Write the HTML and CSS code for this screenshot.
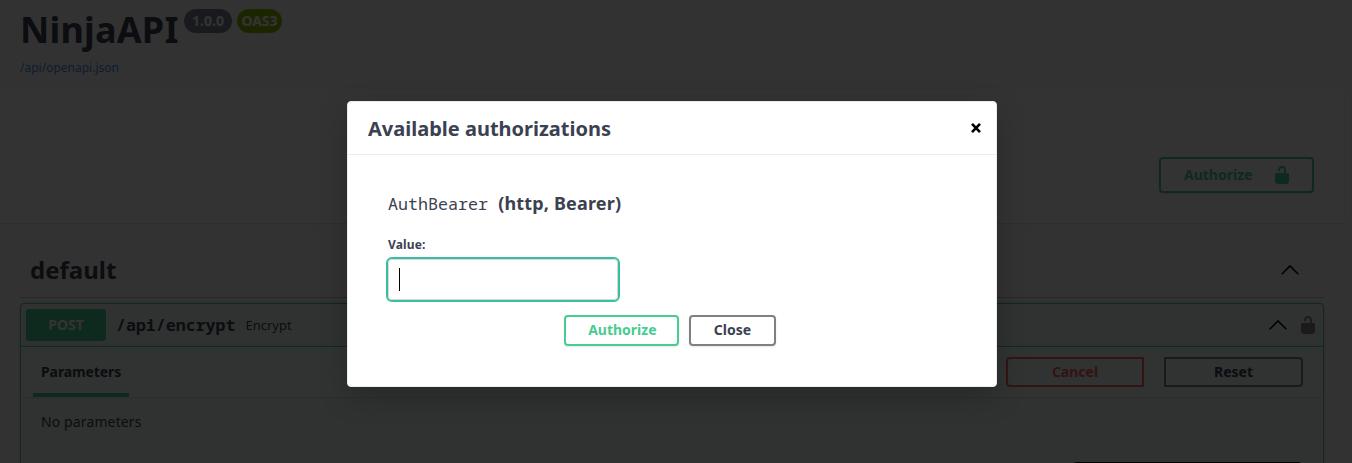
FILE: index.html
```html
<!DOCTYPE html>
<html lang="en">
<head>
<meta charset="utf-8">
<title>NinjaAPI</title>
<link rel="stylesheet" href="styles.css">
</head>
<body>
<main class="page">
  <section class="info">
    <h1 class="title"><span class="name">NinjaAPI</span><span class="badge version">1.0.0</span><span class="badge oas">OAS3</span></h1>
    <a class="spec-link">/api/openapi.json</a>
  </section>
  <section class="schemes">
    <button class="btn authorize top-authorize"><span>Authorize</span>
      <svg class="lock" viewBox="0 0 20 20" width="20" height="20"><path d="M15.8 8H14V5.6C14 2.703 12.665 1 10 1 7.334 1 6 2.703 6 5.6V6h2v-.801C8 3.754 8.797 3 10 3c1.203 0 2 .754 2 2.199V8H4c-.553 0-1 .646-1 1.199V17c0 .549.428 1.139.951 1.307l1.197.387C5.672 18.861 6.55 19 7.1 19h5.8c.549 0 1.428-.139 1.951-.307l1.196-.387c.524-.167.953-.757.953-1.306V9.199C17 8.646 16.352 8 15.8 8z"/></svg>
    </button>
  </section>
  <section class="tag">
    <h2 class="tag-head"><span class="tag-name">default</span>
      <svg class="chevron" viewBox="0 0 20 20" width="20" height="20"><path d="M1.7 14.2 10 5.9l8.3 8.3"/></svg>
    </h2>
    <div class="operation">
      <div class="summary">
        <span class="method">POST</span>
        <span class="path">/api/encrypt</span>
        <span class="desc">Encrypt</span>
        <svg class="chevron" viewBox="0 0 20 20" width="20" height="20"><path d="M1.7 14.2 10 5.9l8.3 8.3"/></svg>
        <svg class="lock muted" viewBox="0 0 20 20" width="20" height="20"><path d="M15.8 8H14V5.6C14 2.703 12.665 1 10 1 7.334 1 6 2.703 6 5.6V6h2v-.801C8 3.754 8.797 3 10 3c1.203 0 2 .754 2 2.199V8H4c-.553 0-1 .646-1 1.199V17c0 .549.428 1.139.951 1.307l1.197.387C5.672 18.861 6.55 19 7.1 19h5.8c.549 0 1.428-.139 1.951-.307l1.196-.387c.524-.167.953-.757.953-1.306V9.199C17 8.646 16.352 8 15.8 8z"/></svg>
      </div>
      <div class="section-head">
        <span class="tab">Parameters</span>
        <button class="btn cancel">Cancel</button>
        <button class="btn reset">Reset</button>
      </div>
      <div class="params">
        <p class="empty">No parameters</p>
        <div class="execute"></div>
      </div>
    </div>
  </section>
</main>
<div class="overlay">
  <div class="modal">
    <header class="modal-head">
      <h3 class="modal-title">Available authorizations</h3>
      <svg class="close" viewBox="0 0 12 12" width="12" height="12"><path d="M2 1.8 10 10.2M10 1.8 2 10.2"/></svg>
    </header>
    <div class="modal-body">
      <h4 class="scheme"><code class="scheme-name">AuthBearer</code><span class="scheme-type">(http, Bearer)</span></h4>
      <label class="label">Value:</label>
      <div class="field"><span class="caret"></span></div>
      <div class="actions">
        <button class="btn authorize">Authorize</button>
        <button class="btn">Close</button>
      </div>
    </div>
  </div>
</div>
</body>
</html>
```
FILE: styles.css
```css
* { box-sizing: border-box; }
html, body { margin: 0; height: 463px; overflow: hidden; }
body { background: #fafafa; color: #3b4151; font-family: "Noto Sans", sans-serif; position: relative; }
h1, h2, h3, h4, p { margin: 0; }
.page { display: flex; flex-direction: column; height: 463px; overflow: hidden; }
.info { flex: none; height: 90px; padding: 5px 20px 0; }
.title { display: flex; align-items: flex-start; height: 50px; font-size: 36px; line-height: 49px; }
.name { width: 164px; letter-spacing: .2px; white-space: nowrap; }
.badge { height: 24px; margin-top: 4px; border-radius: 12px; color: #fff; font-size: 14px; line-height: 24px; text-align: center; }
.version { width: 48px; background: #7d8492; }
.oas { width: 45px; margin-left: 5px; background: #89bf04; }
.spec-link { display: block; margin-top: 4px; color: #4990e2; font-size: 12px; line-height: 17px; }
.schemes { flex: none; display: flex; justify-content: flex-end; align-items: flex-start; height: 133px; margin-right: 8px; padding: 67px 30px 0 0; background: #fff; box-shadow: 0 1px 2px rgba(0,0,0,.15); }
.btn { height: 31px; padding: 0 23px 1px; border: 2px solid #808080; border-radius: 4px; background: transparent; color: #3b4151; box-shadow: 0 1px 2px rgba(0,0,0,.1); font: bold 14px/24px "Noto Sans", sans-serif; white-space: nowrap; }
.authorize { border-color: #49cc90; color: #49cc90; }
.top-authorize { display: flex; align-items: center; justify-content: space-between; width: 155px; height: 36px; padding: 0 20px 0 23px; }
.lock { fill: #49cc90; flex: none; margin-top: -1px; }
.tag { flex: none; padding: 20px 28px 0 20px; }
.tag-head { display: flex; align-items: center; justify-content: space-between; height: 55px; padding: 0 24px 0 10px; border-bottom: 1px solid rgba(59,65,81,.3); font-size: 24px; }
.tag-name { padding-bottom: 2px; }
.chevron { flex: none; fill: none; stroke: #000; stroke-width: 1.5; }
.operation { height: 180px; margin-top: 5px; border: 1px solid #49cc90; border-radius: 4px; background: #f0f8f4; box-shadow: 0 0 3px rgba(0,0,0,.19); overflow: hidden; }
.summary { display: flex; align-items: center; height: 43px; padding: 0 5px; border-bottom: 1px solid #49cc90; }
.method { width: 80px; height: 32px; border-radius: 3px; background: #49cc90; color: #fff; font-size: 14px; font-weight: bold; line-height: 32px; text-align: center; }
.path { margin-left: 10px; padding-bottom: 2px; font: bold 16.6px "Noto Sans Mono", "DejaVu Sans Mono", monospace; }
.desc { flex: 1; margin-left: 10px; font-size: 13px; }
.summary .lock { margin-left: 10px; }
.muted { fill: #888; }
.section-head { display: flex; align-items: center; height: 50px; padding: 0 20px 0 12px; background: #f4faf7; box-shadow: 0 1px 2px rgba(0,0,0,.1); }
.tab { align-self: flex-end; width: 96px; height: 42px; margin-right: auto; padding-left: 8px; border-bottom: 4px solid #49cc90; font-size: 14px; font-weight: bold; letter-spacing: -.1px; line-height: 33px; }
.cancel, .reset { height: 30px; box-shadow: none; }
.cancel { width: 138px; border-color: #ff6060; border-radius: 4px 0 0 4px; color: #ff6060; }
.reset { width: 139px; margin-left: 20px; border-radius: 0 4px 4px 0; }
.params { display: flex; align-items: flex-start; justify-content: space-between; padding: 15px 21px 0 20px; }
.empty { font-size: 14px; letter-spacing: .12px; line-height: 20px; }
.execute { width: 229px; height: 32px; margin-top: 50px; border: 2px solid #000; border-radius: 4px; }
.overlay { position: absolute; inset: 0; display: flex; justify-content: center; align-items: flex-start; padding: 101px 8px 0 0; background: rgba(0,0,0,.8); }
.modal { width: 650px; height: 286px; border: 1px solid #ebebeb; border-radius: 4px; background: #fff; box-shadow: 0 10px 30px rgba(0,0,0,.2); }
.modal-head { display: flex; align-items: center; justify-content: space-between; height: 53px; padding: 0 14px 0 20px; border-bottom: 1px solid #ebebeb; }
.modal-title { font-size: 20px; line-height: 27px; }
.close { fill: none; stroke: #000; stroke-width: 2.6; margin-bottom: 1px; }
.modal-body { display: flex; flex-direction: column; align-items: flex-start; padding: 36px 40px 0; }
.scheme { display: flex; align-items: baseline; gap: 10px; height: 26px; font-size: 18px; line-height: 25px; }
.scheme-name { font: 16.7px/25px "Noto Sans Mono", "DejaVu Sans Mono", monospace; }
.scheme-type { letter-spacing: .17px; }
.label { height: 17px; margin-top: 19px; font-size: 12px; font-weight: bold; letter-spacing: .15px; line-height: 17px; }
.field { display: flex; align-items: center; width: 230px; height: 41px; margin-top: 6px; padding-left: 10px; border: 1px solid #d9d9d9; border-radius: 4px; outline: 2px solid #38bfa1; }
.caret { width: 1px; height: 23px; background: #000; }
.actions { display: flex; align-self: center; gap: 10px; margin: 15px 4px 0 0; }
.actions .authorize { width: 115px; padding: 0 0 1px 2px; }
```
